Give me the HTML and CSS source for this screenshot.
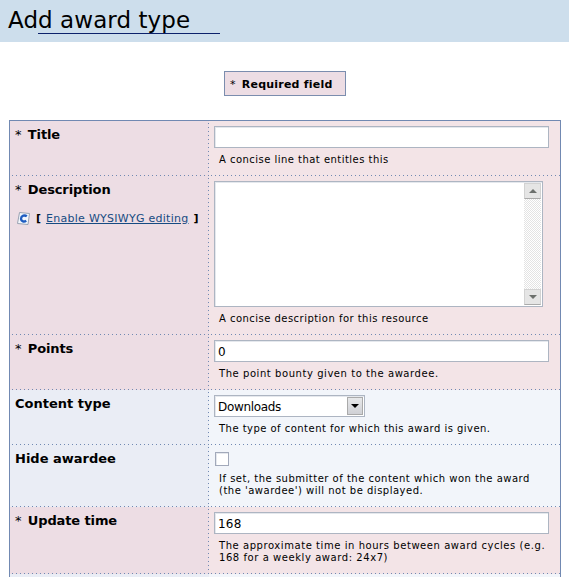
FILE: index.html
```html
<!DOCTYPE html>
<html lang="en">
<head>
<meta charset="utf-8">
<title>Add award type</title>
<link rel="stylesheet" href="styles.css">
</head>
<body>
<header class="banner"><h1>Add award type</h1></header>
<div class="legend"><span class="star">*</span> Required field</div>
<form class="form">
  <div class="row required h-normal">
    <div class="label"><span class="star">*</span> Title</div>
    <div class="field"><div class="input"></div><p class="hint">A concise line that entitles this</p></div>
  </div>
  <div class="row required h-area">
    <div class="label"><span class="star">*</span> Description
      <div class="editor">
        <svg class="icon" width="15" height="15" viewBox="0 0 15 15"><path d="M3.5 1.5 13.5 2.5 12 13.5 1.5 12.5Z" fill="#f2f7fd" stroke="#9aa3b2"/><path d="M10.8 5.4C8.8 3.6 5.2 4.6 5 7.6C5 10.6 8.3 11.2 10.2 9.6" fill="none" stroke="#1f5cc0" stroke-width="2.3"/></svg>
        <b>[</b><a href="#">Enable WYSIWYG editing</a><b>]</b>
      </div>
    </div>
    <div class="field">
      <div class="area"><div class="scroll"><span class="btn"><i class="up"></i></span><span class="btn"><i class="down"></i></span></div></div>
      <p class="hint">A concise description for this resource</p>
    </div>
  </div>
  <div class="row required h-normal">
    <div class="label"><span class="star">*</span> Points</div>
    <div class="field"><div class="input">0</div><p class="hint wide">The point bounty given to the awardee.</p></div>
  </div>
  <div class="row h-normal">
    <div class="label">Content type</div>
    <div class="field"><div class="input select"><span>Downloads</span><span class="drop"><i class="caret"></i></span></div><p class="hint">The type of content for which this award is given.</p></div>
  </div>
  <div class="row h-check">
    <div class="label">Hide awardee</div>
    <div class="field"><div class="check"></div><p class="hint mid">If set, the submitter of the content which won the award<br>(the 'awardee') will not be displayed.</p></div>
  </div>
  <div class="row required h-double">
    <div class="label"><span class="star">*</span> Update time</div>
    <div class="field"><div class="input">168</div><p class="hint wide">The approximate time in hours between award cycles (e.g.<br>168 for a weekly award: 24x7)</p></div>
  </div>
  <div class="row h-last">
    <div class="label"></div>
    <div class="field"></div>
  </div>
</form>
</body>
</html>
```
FILE: styles.css
```css
* { box-sizing: border-box; }
body { margin: 0; height: 577px; overflow: hidden; background: #fff; color: #000; font-family: Verdana, "DejaVu Sans", sans-serif; }
.banner { height: 42px; padding: 5px 8px 0; background: #cddeec; }
h1 { margin: 0; width: 212px; height: 29px; font-size: 23px; font-weight: 400; line-height: 31px; letter-spacing: .07px; background: linear-gradient(#0c216b, #0c216b) 30px 28px / 182px 1px no-repeat; }
.legend { width: 122px; height: 25px; margin: 29px 0 0 224px; padding-left: 5px; border: 1px solid #7b8dae; background: #eddde4; font-size: 11px; font-weight: 700; line-height: 25px; letter-spacing: .22px; white-space: nowrap; }
.star { margin-right: 2px; font-weight: 400; }
.form { width: 552px; margin: 24px 0 0 9px; border: 1px solid #7189b2; border-bottom: 0; }
.row { display: flex; background: #f2f5fa; }
.h-normal { height: 55px; }
.h-area { height: 159px; }
.h-check { height: 62px; }
.h-double { height: 67px; }
.label { width: 199px; padding: 6px 5px 0; font-size: 13px; font-weight: 700; line-height: 16px; white-space: nowrap; background:
  repeating-linear-gradient(90deg, #7189b2 0 1px, transparent 1px 4px) 2px 100% / 100% 1px no-repeat,
  repeating-linear-gradient(#7189b2 0 1px, transparent 1px 4px) 100% 2px / 1px 100% no-repeat, #eaedf5; }
.field { flex: 1; padding: 5px 0 0 5px; background: repeating-linear-gradient(90deg, #7189b2 0 1px, transparent 1px 4px) 2px 100% / 100% 1px no-repeat; }
.required { background: #f3e4e7; }
.required .label { background-color: #eddde4; letter-spacing: -.12px; }
.h-last { height: 3px; }
.h-last .label, .h-last .field { padding: 0; background-size: 0 0; }
.input { width: 335px; height: 22px; padding-left: 3px; border: 1px solid #adb5c2; box-shadow: inset 1px 1px #e5e8ed; background: #fff; font: 12px/22px "DejaVu Sans", sans-serif; letter-spacing: .2px; }
.hint { margin: 6px 0 0 5px; font-size: 10px; line-height: 12px; letter-spacing: .47px; white-space: nowrap; }
.mid { letter-spacing: .5px; }
.wide { letter-spacing: .56px; }
.editor { display: flex; align-items: center; margin-top: 12px; height: 17px; font-size: 11px; letter-spacing: 0; }
.icon { margin: 0 5px 0 1px; }
a { margin: 0 5px; color: #164b82; font-weight: 400; letter-spacing: .27px; text-decoration: underline; text-underline-offset: 1px; }
.area { display: flex; justify-content: flex-end; width: 329px; height: 126px; padding: 1px; border: 1px solid #adb5c2; box-shadow: inset 1px 1px #e5e8ed; background: #fff; }
.scroll { display: flex; flex-direction: column; justify-content: space-between; width: 17px; background: repeating-conic-gradient(#e3e3e3 0 25%, #fff 0 50%) 0 0 / 2px 2px; }
.btn, .drop { display: flex; align-items: center; justify-content: center; width: 17px; height: 16px; border: 1px solid #d2d2d2; border-bottom-color: #aaa; background: #e5e5e5; }
.up, .down, .caret { border: 4px solid transparent; border-top: 0; border-bottom-color: #6c706d; }
.down, .caret { border-top: 4px solid #6c706d; border-bottom: 0; }
.caret { border-top-color: #000; }
.select { display: flex; justify-content: space-between; width: 151px; padding-right: 1px; letter-spacing: -.33px; }
.drop { width: 16px; height: 18px; margin-top: 1px; border-color: #aaa; background: linear-gradient(#e7e8ea, #cfd0d5); }
.check { width: 14px; height: 14px; margin: 2px 0 0 1px; border: 1px solid #a2a9ba; box-shadow: inset 1px 1px #e5e8ed; background: #fff; }
.check + .hint { margin-top: 7px; }
```
